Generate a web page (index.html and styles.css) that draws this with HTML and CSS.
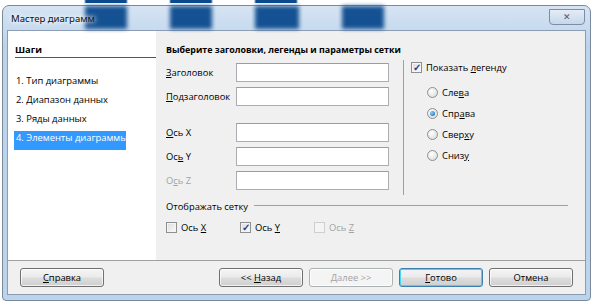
FILE: index.html
```html
<!DOCTYPE html>
<html lang="ru">
<head>
  <meta charset="UTF-8">
  <title>Мастер диаграмм</title>
  <link rel="stylesheet" href="styles.css">
</head>
<body>
  <div class="janela">
    <div class="titulo">
      <div class="vidro"><i></i><i></i><i></i><i></i></div>
      <span class="nome">Мастер диаграмм</span>
      <span class="fechar">✕</span>
    </div>
    <div class="cliente">
      <div class="principal">
        <nav class="passos">
          <h3>Шаги</h3>
          <ul>
            <li>1. Тип диаграммы</li>
            <li>2. Диапазон данных</li>
            <li>3. Ряды данных</li>
            <li class="ativo">4. Элементы диаграммы</li>
          </ul>
        </nav>
        <section class="pagina">
          <h4>Выберите заголовки, легенды и параметры сетки</h4>
          <div class="topo">
            <div class="campos">
              <label class="linha"><span><u>З</u>аголовок</span><span class="entrada"></span></label>
              <label class="linha"><span><u>П</u>одзаголовок</span><span class="entrada"></span></label>
              <label class="linha espaco"><span><u>О</u>сь X</span><span class="entrada"></span></label>
              <label class="linha"><span>Ос<u>ь</u> Y</span><span class="entrada"></span></label>
              <label class="linha off"><span>О<u>с</u>ь Z</span><span class="entrada"></span></label>
            </div>
            <div class="legenda">
              <label class="opcao"><span class="caixa marcada"></span><span>Показать <u>л</u>егенду</span></label>
              <div class="radios">
                <label class="opcao"><span class="radio"></span><span>Сле<u>в</u>а</span></label>
                <label class="opcao"><span class="radio marcado"></span><span>Спр<u>а</u>ва</span></label>
                <label class="opcao"><span class="radio"></span><span>Свер<u>х</u>у</span></label>
                <label class="opcao"><span class="radio"></span><span>Сниз<u>у</u></span></label>
              </div>
            </div>
          </div>
          <div class="grade">
            <div class="grade-titulo"><span>Отображать сетку</span><span class="traco"></span></div>
            <div class="grade-opcoes">
              <label class="opcao"><span class="caixa"></span><span>Ось <u>X</u></span></label>
              <label class="opcao"><span class="caixa marcada"></span><span>Ось <u>Y</u></span></label>
              <label class="opcao off"><span class="caixa"></span><span>Ось <u>Z</u></span></label>
            </div>
          </div>
        </section>
      </div>
      <div class="botoes">
        <button><u>С</u>правка</button>
        <span class="vazio"></span>
        <button>&lt;&lt; <u>Н</u>азад</button>
        <button class="off"><u>Д</u>алее &gt;&gt;</button>
        <button class="padrao"><u>Г</u>отово</button>
        <button>Отмена</button>
      </div>
    </div>
  </div>
</body>
</html>
```
FILE: styles.css
```css
:root {
  --moldura: #bcd3ec;
  --cinza: #f0f0f0;
  --borda: #abadb3;
  --desligado: #a3a3a3;
  --selecao: #3399ff;
  --vidro: #0b4a8e;
}

* {
  box-sizing: border-box;
  margin: 0;
  padding: 0;
}

body {
  background:
    linear-gradient(to right,
      transparent 84px, var(--vidro) 86px, var(--vidro) 126px, transparent 128px,
      transparent 169px, var(--vidro) 171px, var(--vidro) 211px, transparent 213px,
      transparent 254px, var(--vidro) 256px, var(--vidro) 296px, transparent 298px) top left / 100% 3px no-repeat,
    #fff;
  font-family: "Open Sans", "Noto Sans", sans-serif;
  font-size: 9.4px;
  color: #000;
  padding: 5px 0 0 2px;
}

u {
  text-decoration: underline;
  text-underline-offset: 1px;
}

.janela {
  width: 589px;
  height: 296px;
  border: 1px solid #7a8a9c;
  border-radius: 7px 7px 4px 4px;
  background: linear-gradient(to bottom, #d6e4f3, var(--moldura) 40px);
  padding: 0 4px 5px 4px;
  display: flex;
  flex-direction: column;
}

.titulo {
  position: relative;
  height: 24px;
  display: flex;
  align-items: center;
  justify-content: space-between;
  margin: 0 -4px;
  padding: 0 5px 0 6px;
}

/* blocos escuros do fundo vistos atraves do vidro */
.vidro {
  position: absolute;
  left: 82px;
  top: 0;
  height: 23px;
  display: flex;
  gap: 43px;
}

.vidro i {
  width: 42px;
  height: 100%;
  background: var(--vidro);
  filter: blur(2px);
  opacity: 0.95;
}

.vidro i:nth-child(3) {
  width: 44px;
}

.nome {
  position: relative;
  font-family: "Noto Sans", sans-serif;
  font-size: 9.6px;
  color: #111;
  margin-top: 1px;
  padding: 0 2px;
  text-shadow: 0 0 6px #fff, 0 0 4px #fff;
}

.fechar {
  width: 36px;
  height: 16px;
  margin-top: -3px;
  border: 1px solid #7b8ea6;
  border-radius: 0 0 4px 4px;
  background: linear-gradient(to bottom, #e3ecf6, #c6d7ea);
  color: #4d5a6a;
  font-size: 9px;
  display: flex;
  align-items: center;
  justify-content: center;
}

.cliente {
  flex: 1;
  border: 1px solid #8c9db2;
  background: var(--cinza);
  display: flex;
  flex-direction: column;
}

.principal {
  height: 230px;
  display: flex;
  border-bottom: 1px solid #a0a0a0;
}

.passos {
  width: 148px;
  background: #fff;
  padding: 12px 0 0 7px;
}

.passos h3 {
  font-size: 9.4px;
  font-weight: bold;
  border-bottom: 1px solid #555;
  padding-bottom: 1px;
  line-height: 13px;
}

.passos ul {
  list-style: none;
  margin-top: 16px;
}

.passos li {
  line-height: 14px;
  height: 19px;
  padding-left: 1px;
  white-space: nowrap;
}

.passos li.ativo {
  background: var(--selecao);
  color: #fff;
  width: 112px;
  margin-left: -1px;
  padding-left: 2px;
}

.pagina {
  flex: 1;
  padding: 12px 0 0 10px;
}

.pagina h4 {
  font-size: 8.9px;
  font-weight: bold;
  line-height: 13px;
  white-space: nowrap;
}

.topo {
  display: flex;
  margin-top: 7px;
}

.campos {
  width: 223px;
  display: flex;
  flex-direction: column;
  gap: 5px;
}

.linha {
  display: flex;
  align-items: center;
  justify-content: space-between;
}

.linha.espaco {
  margin-top: 12px;
}

.entrada {
  width: 153px;
  height: 19px;
  background: #fff;
  border: 1px solid var(--borda);
  border-top-color: #9a9da4;
}

.off {
  color: var(--desligado);
}

.legenda {
  margin-left: 14px;
  border-left: 1px solid #a0a0a0;
  height: 135px;
  margin-top: -3px;
  padding: 0 0 0 7px;
}

.opcao {
  display: flex;
  align-items: center;
  gap: 4px;
  height: 14px;
  white-space: nowrap;
}

.radios {
  margin: 11px 0 0 16px;
  display: flex;
  flex-direction: column;
  gap: 7px;
}

.caixa {
  width: 11px;
  height: 11px;
  border: 1px solid #8e8f8f;
  background: linear-gradient(135deg, #dcdcdc, #fbfbfb);
  box-shadow: inset 0 0 0 1px #f4f4f4;
  display: flex;
  align-items: center;
  justify-content: center;
}

.caixa.marcada::after {
  content: "✓";
  color: #263e8c;
  font-size: 10px;
  font-weight: bold;
  line-height: 9px;
}

.off .caixa {
  border-color: #cfcfcf;
  background: #f4f4f4;
}

.radio {
  width: 11px;
  height: 11px;
  border-radius: 50%;
  border: 1px solid #8e8f8f;
  background: radial-gradient(circle at 40% 35%, #fff, #d6d6d6);
  display: flex;
  align-items: center;
  justify-content: center;
}

.radio.marcado::after {
  content: "";
  width: 5px;
  height: 5px;
  border-radius: 50%;
  background: radial-gradient(circle at 35% 35%, #8ad0ff, #0d5ea8);
}

.grade {
  margin-top: 5px;
  width: 402px;
}

.grade-titulo {
  display: flex;
  align-items: center;
  gap: 6px;
}

.traco {
  flex: 1;
  border-top: 1px solid #a0a0a0;
  margin-top: -2px;
}

.grade-opcoes {
  display: flex;
  margin-top: 7px;
}

.grade-opcoes .opcao {
  width: 74px;
}

.botoes {
  flex: 1;
  display: flex;
  align-items: center;
  gap: 6px;
  padding: 0 12px 0 12px;
}

.vazio {
  flex: 1;
}

button {
  width: 84px;
  height: 19px;
  font-family: inherit;
  font-size: 9.4px;
  color: #000;
  border: 1px solid #707070;
  border-radius: 3px;
  background: linear-gradient(to bottom, #f4f4f4 0%, #ebebeb 48%, #dddddd 52%, #cfcfcf 100%);
  box-shadow: inset 0 0 0 1px rgba(255,255,255,0.7);
}

button.off {
  color: #a3a3a3;
  border-color: #adb2b5;
  background: #f4f4f4;
}

button.padrao {
  border-color: #3c7fb1;
  box-shadow: inset 0 0 0 1px #48d3f8;
}
```
